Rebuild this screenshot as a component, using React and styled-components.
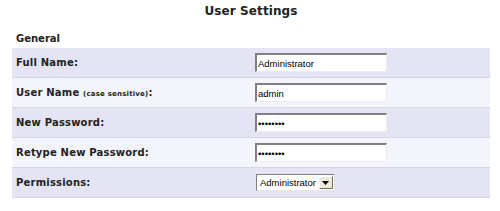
import React from 'react';
import styled, { createGlobalStyle } from 'styled-components';

const Global = createGlobalStyle`
  body {
    margin: 0;
    background: #ffffff;
    font-family: "DejaVu Sans", Verdana, sans-serif;
  }
`;

const Page = styled.div`
  width: 500px;
  height: 211px;
  padding: 0 10px 0 12px;
  box-sizing: border-box;
`;

const Title = styled.h2`
  margin: 0;
  padding-top: 4px;
  height: 30px;
  box-sizing: border-box;
  text-align: center;
  font-size: 12px;
  font-weight: bold;
  color: #222;
  letter-spacing: 0.1px;
`;

const Section = styled.div`
  font-size: 10px;
  font-weight: bold;
  color: #222;
  padding-left: 4px;
  height: 18px;
  line-height: 18px;
`;

const Row = styled.div`
  display: flex;
  align-items: center;
  height: 29px;
  border-bottom: 1px solid #d6d6e2;
  background: ${p => (p.$alt ? '#f4f4fc' : '#e4e4f4')};
`;

const Label = styled.div`
  width: 243px;
  padding-left: 4px;
  box-sizing: border-box;
  font-size: 10px;
  font-weight: bold;
  color: #222;
  letter-spacing: 0.2px;
`;

const Small = styled.span`
  font-size: 7px;
`;

const Field = styled.input`
  width: 132px;
  height: 19px;
  box-sizing: border-box;
  border-top: 2px solid #808080;
  border-left: 2px solid #808080;
  border-right: 1px solid #ececec;
  border-bottom: 1px solid #ececec;
  background: #ffffff;
  padding: 0 1px;
  font-family: "Liberation Sans", Arial, sans-serif;
  font-size: 9.5px;
  color: #000;
  outline: none;
`;

const SelectBox = styled.div`
  display: flex;
  align-items: stretch;
  height: 15px;
  margin-left: 1px;
  border-top: 1px solid #808080;
  border-left: 1px solid #808080;
  border-right: 1px solid #e6e6e6;
  border-bottom: 1px solid #e6e6e6;
  background: #fff;
`;

const SelectValue = styled.div`
  padding: 0 3px 0 3px;
  font-family: "Liberation Sans", Arial, sans-serif;
  font-size: 9.5px;
  line-height: 15px;
  color: #000;
`;

const ArrowButton = styled.div`
  width: 12px;
  background: #ece9d8;
  border-top: 1px solid #fff;
  border-left: 1px solid #fff;
  border-right: 1px solid #716f64;
  border-bottom: 1px solid #716f64;
  display: flex;
  align-items: center;
  justify-content: center;
  margin: 1px 1px 1px 0;
`;

const rows = [
  { label: 'Full Name:', value: 'Administrator', type: 'text' },
  { label: 'User Name', note: '(case sensitive)', value: 'admin', type: 'text' },
  { label: 'New Password:', value: 'password', type: 'password' },
  { label: 'Retype New Password:', value: 'password', type: 'password' },
];

export default function App() {
  return (
    <Page>
      <Global />
      <Title>User Settings</Title>
      <Section>General</Section>
      {rows.map((r, i) => (
        <Row key={r.label} $alt={i % 2 === 1}>
          <Label>
            {r.label}
            {r.note && (
              <>
                {' '}
                <Small>{r.note}</Small>:
              </>
            )}
          </Label>
          <Field type={r.type} defaultValue={r.value} />
        </Row>
      ))}
      <Row>
        <Label>Permissions:</Label>
        <SelectBox>
          <SelectValue>Administrator</SelectValue>
          <ArrowButton>
            <svg width="7" height="4" viewBox="0 0 7 4">
              <path d="M0 0h7L3.5 4z" fill="#000" />
            </svg>
          </ArrowButton>
        </SelectBox>
      </Row>
    </Page>
  );
}
